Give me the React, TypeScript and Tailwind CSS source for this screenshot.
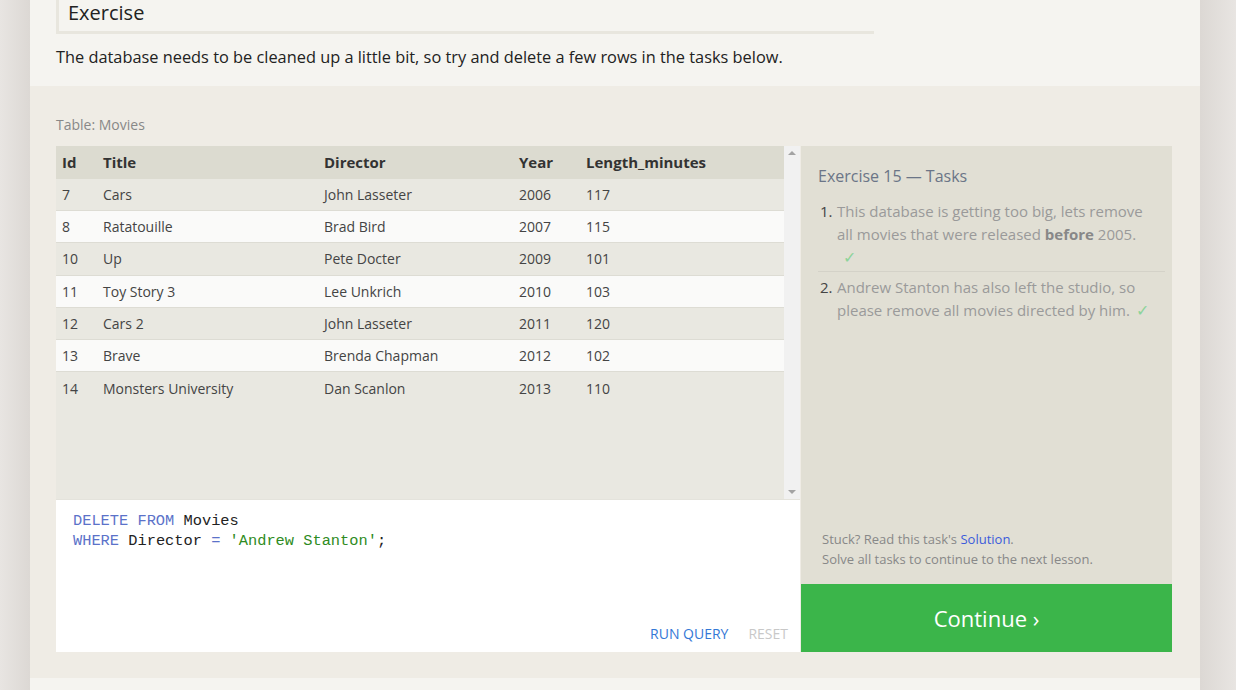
import React from 'react';

const movies = [
  { id: 7, title: 'Cars', director: 'John Lasseter', year: 2006, length: 117 },
  { id: 8, title: 'Ratatouille', director: 'Brad Bird', year: 2007, length: 115 },
  { id: 10, title: 'Up', director: 'Pete Docter', year: 2009, length: 101 },
  { id: 11, title: 'Toy Story 3', director: 'Lee Unkrich', year: 2010, length: 103 },
  { id: 12, title: 'Cars 2', director: 'John Lasseter', year: 2011, length: 120 },
  { id: 13, title: 'Brave', director: 'Brenda Chapman', year: 2012, length: 102 },
  { id: 14, title: 'Monsters University', director: 'Dan Scanlon', year: 2013, length: 110 },
];

const cols = 'grid grid-cols-[41px_221px_195px_67px_1fr] items-center';

const App = () => {
  return (
    <div
      className="flex h-[690px] overflow-hidden text-[#222]"
      style={{ fontFamily: '"Open Sans", "Liberation Sans", sans-serif' }}
    >
      {/* left gutter */}
      <div className="w-[30px] shrink-0 bg-gradient-to-r from-[#e8e5e2] to-[#dcd8d4]" />

      <div className="w-[1170px] shrink-0 bg-[#f5f4f0] flex flex-col">
        {/* Intro */}
        <div className="h-[86px] pl-[26px]">
          <div className="w-[818px] border-l-[3px] border-b-[3px] border-[#e8e6de] pl-[9px] pb-[5px]">
            <h2 className="text-[20px] leading-[26px] font-normal">Exercise</h2>
          </div>
          <p className="mt-[11px] text-[16.35px] leading-[24px]">
            The database needs to be cleaned up a little bit, so try and delete a few rows in the tasks below.
          </p>
        </div>

        {/* Exercise */}
        <div className="bg-[#efece5] pt-[29px] pb-[26px] pl-[26px] pr-[28px]">
          <div className="text-[14px] leading-[20px] text-[#888] mb-[11px]">Table: Movies</div>

          <div className="flex gap-px">
            <div className="w-[744px] flex flex-col">
              {/* Table */}
              <div className="flex h-[353px]">
                <div className="flex-1 bg-[#e9e8e1] text-[14px]">
                  <div className={`${cols} h-[33px] bg-[#dcdbd0] font-bold text-[15px] text-[#333]`}>
                    <span className="px-[6px]">Id</span>
                    <span className="px-[6px]">Title</span>
                    <span className="px-[6px]">Director</span>
                    <span className="px-[6px]">Year</span>
                    <span className="px-[6px]">Length_minutes</span>
                  </div>
                  {movies.map((m, i) => (
                    <div
                      key={m.id}
                      className={`${cols} h-[32.2px] text-[#444] ${
                        i < movies.length - 1 ? 'border-b border-[#dddcd4]' : ''
                      } ${i % 2 === 0 ? 'bg-[#e9e8e1]' : 'bg-[#fafaf9]'}`}
                    >
                      <span className="px-[6px]">{m.id}</span>
                      <span className="px-[6px]">{m.title}</span>
                      <span className="px-[6px]">{m.director}</span>
                      <span className="px-[6px]">{m.year}</span>
                      <span className="px-[6px]">{m.length}</span>
                    </div>
                  ))}
                </div>
                {/* scrollbar */}
                <div className="w-[16px] bg-[#f1f1f1] flex flex-col items-center justify-between py-[5px]">
                  <div className="w-0 h-0 border-l-[4px] border-r-[4px] border-b-[4px] border-l-transparent border-r-transparent border-b-[#a3a3a3]" />
                  <div className="w-0 h-0 border-l-[4px] border-r-[4px] border-t-[4px] border-l-transparent border-r-transparent border-t-[#a3a3a3]" />
                </div>
              </div>

              {/* Editor */}
              <div className="h-[153px] bg-white border-t border-[#e4e3dc] flex flex-col justify-between">
                <pre
                  className="pl-[17px] pt-[11px] text-[15.35px] leading-[20px]"
                  style={{ fontFamily: '"Liberation Mono", "DejaVu Sans Mono", monospace' }}
                >
                  <span className="text-[#5b72c9]">DELETE FROM</span> Movies{'\n'}
                  <span className="text-[#5b72c9]">WHERE</span> Director <span className="text-[#5b72c9]">=</span>{' '}
                  <span className="text-[#2e8b22]">'Andrew Stanton'</span>;
                </pre>
                <div className="flex justify-end gap-[20px] pr-[12px] pb-[8px] text-[14px] leading-[20px]">
                  <span className="text-[#3478d6]">RUN QUERY</span>
                  <span className="text-[#c8c8c8]">RESET</span>
                </div>
              </div>
            </div>

            {/* Tasks */}
            <div className="flex-1 flex flex-col">
              <div className="h-[438px] bg-[#e1dfd4] flex flex-col justify-between pl-[17px] pr-[7px] pt-[18px] pb-[15px]">
                <div>
                  <h3 className="text-[16px] leading-[24px] text-[#6b7587]">Exercise 15 — Tasks</h3>
                  <ol className="mt-[12px] text-[15px] leading-[23px] text-[#9a9a9a]">
                    <li className="flex pb-[2px] border-b border-[#d4d2c8]">
                      <span className="w-[19px] shrink-0 pl-[2px] text-[#444]">1.</span>
                      <div>
                        This database is getting too big, lets remove
                        <br />
                        all movies that were released <b className="text-[#888]">before</b> 2005.
                        <div className="pl-[6px] text-[#8dd49a] text-[16px]">✓</div>
                      </div>
                    </li>
                    <li className="flex mt-[4px]">
                      <span className="w-[19px] shrink-0 pl-[2px] text-[#444]">2.</span>
                      <div>
                        Andrew Stanton has also left the studio, so
                        <br />
                        please remove all movies directed by him.
                        <span className="ml-[6px] text-[#8dd49a] text-[16px]">✓</span>
                      </div>
                    </li>
                  </ol>
                </div>
                <div className="pl-[4px] text-[13px] leading-[20px] text-[#888]">
                  <div>
                    Stuck? Read this task's <span className="text-[#3b5bdb]">Solution</span>.
                  </div>
                  <div>Solve all tasks to continue to the next lesson.</div>
                </div>
              </div>
              <div className="h-[68px] bg-[#3bb54a] flex items-center justify-center text-white text-[22px]">
                Continue ›
              </div>
            </div>
          </div>
        </div>
      </div>

      {/* right gutter */}
      <div className="flex-1 bg-gradient-to-r from-[#dcd8d4] to-[#e8e5e2]" />
    </div>
  );
};

export default App;
